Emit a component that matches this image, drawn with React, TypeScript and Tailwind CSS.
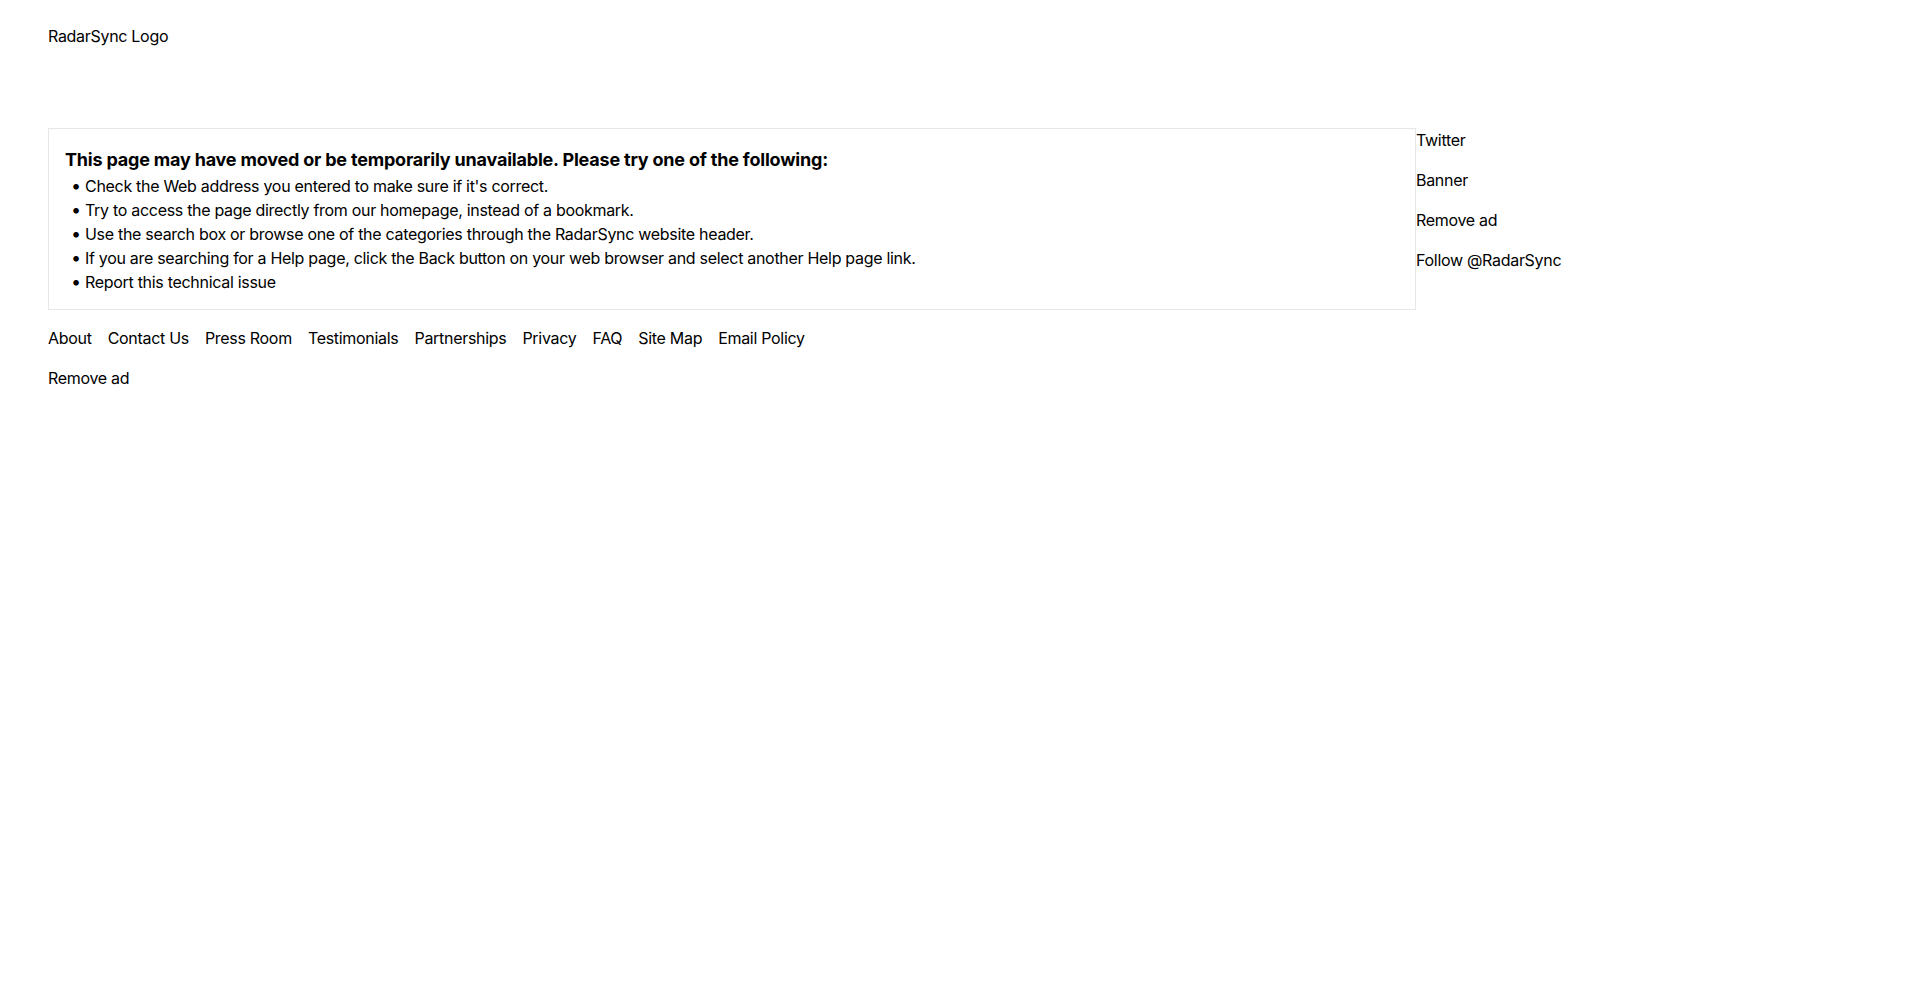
export default function App() {
  const tips = [
    "Check the Web address you entered to make sure if it's correct.",
    "Try to access the page directly from our homepage, instead of a bookmark.",
    "Use the search box or browse one of the categories through the RadarSync website header.",
    "If you are searching for a Help page, click the Back button on your web browser and select another Help page link.",
    "Report this technical issue",
  ];

  const links = [
    "About",
    "Contact Us",
    "Press Room",
    "Testimonials",
    "Partnerships",
    "Privacy",
    "FAQ",
    "Site Map",
    "Email Policy",
  ];

  return (
    <div
      className="min-h-screen bg-white text-black text-base leading-6 tracking-[-0.3px] px-12"
      style={{ fontFamily: "Inter, 'Noto Sans', sans-serif" }}
    >
      <header className="pt-6 h-32">
        <a href="#">RadarSync Logo</a>
      </header>

      <div className="flex">
        <main className="w-[1368px] shrink-0 border border-[#e5e7eb] px-4 pt-[17px] pb-[15px]">
          <h1 className="text-lg leading-7 font-bold tracking-[-0.2px]">
            This page may have moved or be temporarily unavailable. Please try one of the following:
          </h1>
          <ul>
            {tips.map((t) => (
              <li key={t} className="flex items-baseline">
                <span className="w-5 shrink-0 pl-[6px] text-lg leading-6">•</span>
                <span>{t}</span>
              </li>
            ))}
          </ul>
        </main>
        <aside className="flex flex-col gap-4">
          <a href="#">Twitter</a>
          <div>Banner</div>
          <a href="#">Remove ad</a>
          <a href="#">Follow @RadarSync</a>
        </aside>
      </div>

      <footer className="mt-4">
        <nav className="flex gap-4">
          {links.map((l) => (
            <a key={l} href="#">
              {l}
            </a>
          ))}
        </nav>
        <div className="mt-4">
          <a href="#">Remove ad</a>
        </div>
      </footer>
    </div>
  );
}
